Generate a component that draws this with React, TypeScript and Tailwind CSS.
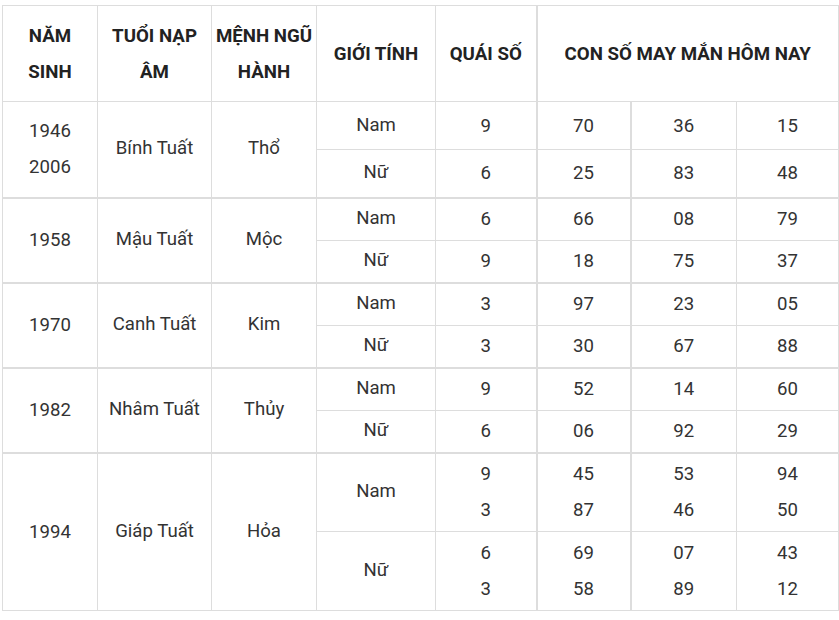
import React from "react";

type Sub = { g: string; q: string[]; n: string[][] };
type Group = { years: string[]; tuoi: string; menh: string; h: [number, number]; subs: Sub[] };

const groups: Group[] = [
  {
    years: ["1946", "2006"],
    tuoi: "Bính Tuất",
    menh: "Thổ",
    h: [48, 48],
    subs: [
      { g: "Nam", q: ["9"], n: [["70"], ["36"], ["15"]] },
      { g: "Nữ", q: ["6"], n: [["25"], ["83"], ["48"]] },
    ],
  },
  {
    years: ["1958"],
    tuoi: "Mậu Tuất",
    menh: "Mộc",
    h: [43, 42],
    subs: [
      { g: "Nam", q: ["6"], n: [["66"], ["08"], ["79"]] },
      { g: "Nữ", q: ["9"], n: [["18"], ["75"], ["37"]] },
    ],
  },
  {
    years: ["1970"],
    tuoi: "Canh Tuất",
    menh: "Kim",
    h: [43, 42],
    subs: [
      { g: "Nam", q: ["3"], n: [["97"], ["23"], ["05"]] },
      { g: "Nữ", q: ["3"], n: [["30"], ["67"], ["88"]] },
    ],
  },
  {
    years: ["1982"],
    tuoi: "Nhâm Tuất",
    menh: "Thủy",
    h: [43, 42],
    subs: [
      { g: "Nam", q: ["9"], n: [["52"], ["14"], ["60"]] },
      { g: "Nữ", q: ["6"], n: [["06"], ["92"], ["29"]] },
    ],
  },
  {
    years: ["1994"],
    tuoi: "Giáp Tuất",
    menh: "Hỏa",
    h: [79, 79],
    subs: [
      { g: "Nam", q: ["9", "3"], n: [["45", "87"], ["53", "46"], ["94", "50"]] },
      { g: "Nữ", q: ["6", "3"], n: [["69", "58"], ["07", "89"], ["43", "12"]] },
    ],
  },
];

function Lines({ items }: { items: string[] }) {
  return (
    <>
      {items.map((t, i) => (
        <div key={i} className="leading-[36px]">
          {t}
        </div>
      ))}
    </>
  );
}

export default function App() {
  const th = "border border-[#dddddd] text-center align-middle font-bold text-[18.7px] leading-[36px] text-[#222222] p-0";
  const td = "border border-[#dddddd] text-center align-middle p-0";
  return (
    <div className="w-[839px] h-[620px] bg-white pt-[5px] pl-[2px]" style={{ fontFamily: "Roboto, 'Noto Sans', sans-serif" }}>
      <table className="border-collapse table-fixed w-[836px] text-[18.6px] text-[#333333]">
        <colgroup>
          <col className="w-[95px]" />
          <col className="w-[114px]" />
          <col className="w-[105px]" />
          <col className="w-[119px]" />
          <col className="w-[101px]" />
          <col className="w-[94px]" />
          <col className="w-[106px]" />
          <col className="w-[102px]" />
        </colgroup>
        <thead>
          <tr className="h-[96px]">
            <th className={th}>
              NĂM
              <br />
              SINH
            </th>
            <th className={th}>
              TUỔI NẠP
              <br />
              ÂM
            </th>
            <th className={th}>
              MỆNH NGŨ
              <br />
              HÀNH
            </th>
            <th className={th}>GIỚI TÍNH</th>
            <th className={th}>QUÁI SỐ</th>
            <th colSpan={3} className={th + " border-l-2"}>
              CON SỐ MAY MẮN HÔM NAY
            </th>
          </tr>
        </thead>
        <tbody>
          {groups.map((g, gi) => {
            const last = gi === groups.length - 1;
            const bb = last ? "" : " border-b-2";
            return g.subs.map((s, si) => (
              <tr key={gi + "-" + si} style={{ height: g.h[si] }}>
                {si === 0 && (
                  <>
                    <td rowSpan={2} className={td + bb}>
                      <Lines items={g.years} />
                    </td>
                    <td rowSpan={2} className={td + bb}>
                      {g.tuoi}
                    </td>
                    <td rowSpan={2} className={td + bb}>
                      {g.menh}
                    </td>
                  </>
                )}
                <td className={td + (si === 1 ? bb : "")}>{s.g}</td>
                <td className={td + (si === 1 ? bb : "")}>
                  <Lines items={s.q} />
                </td>
                <td className={td + " border-l-2" + (si === 1 ? bb : "")}>
                  <Lines items={s.n[0]} />
                </td>
                <td className={td + " border-l-2" + (si === 1 ? bb : "")}>
                  <Lines items={s.n[1]} />
                </td>
                <td className={td + (si === 1 ? bb : "")}>
                  <Lines items={s.n[2]} />
                </td>
              </tr>
            ));
          })}
        </tbody>
      </table>
    </div>
  );
}
